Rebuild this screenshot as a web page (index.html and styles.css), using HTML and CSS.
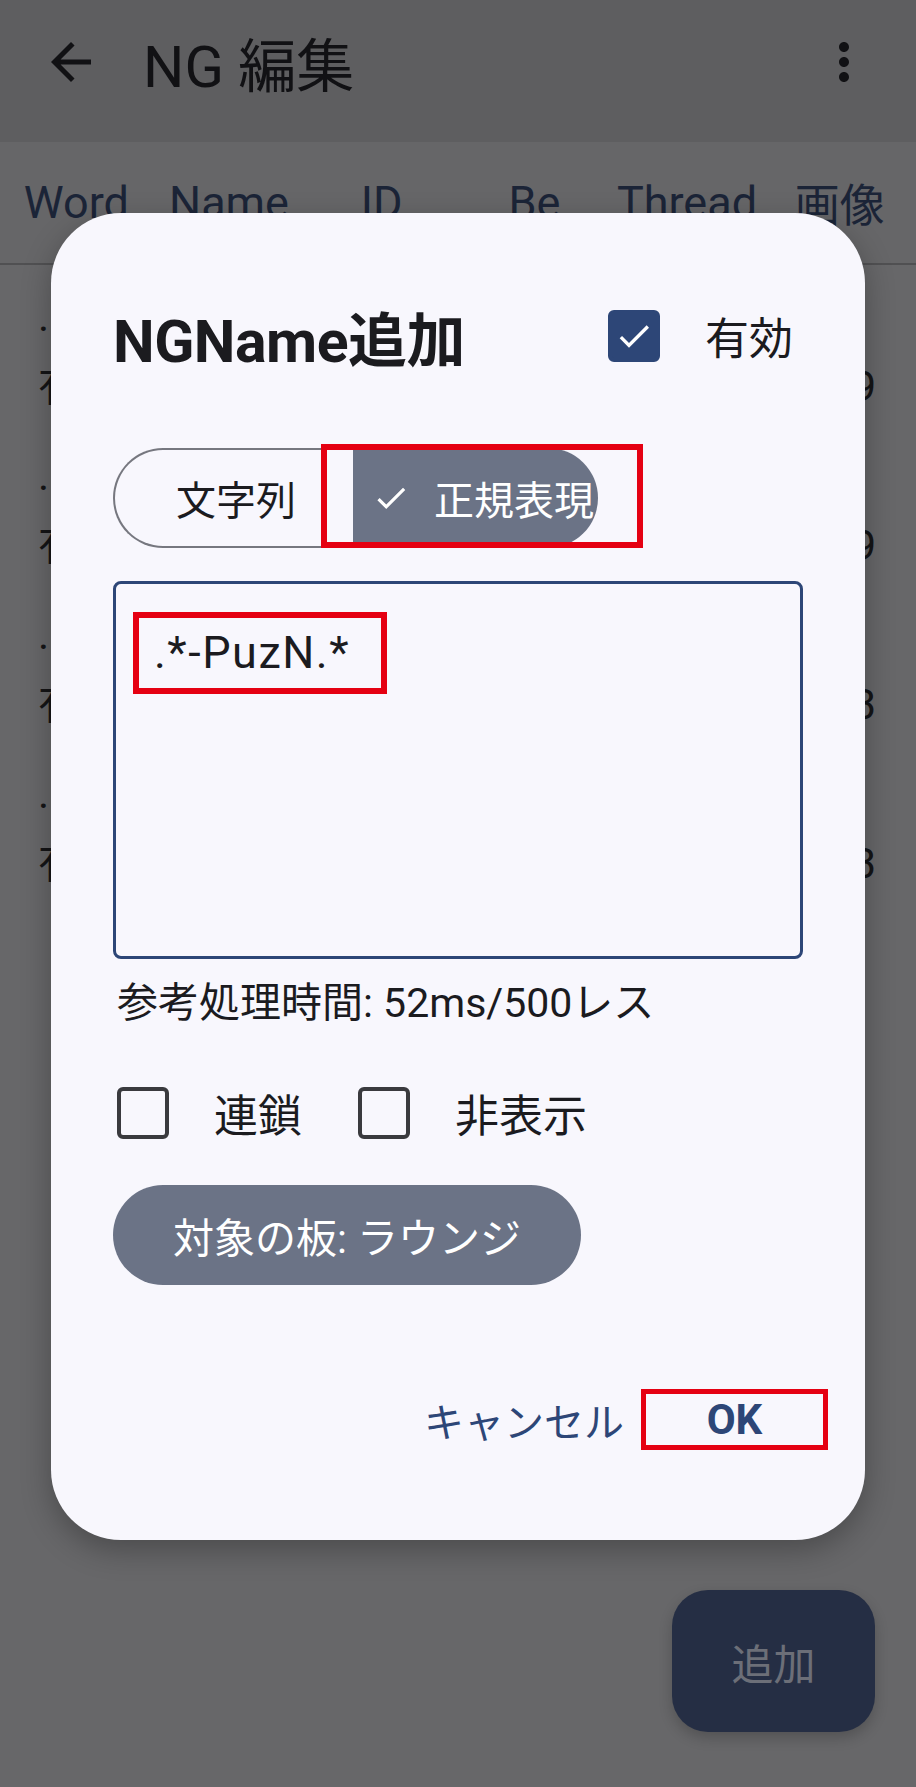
FILE: index.html
```html
<!DOCTYPE html>
<html lang="ja">
<head>
  <meta charset="UTF-8" />
  <meta name="viewport" content="width=device-width, initial-scale=1.0" />
  <title>NG 編集</title>
  <link rel="stylesheet" href="styles.css">
</head>
<body>

  <!-- Page behind the dialog (already dimmed by scrim) -->
  <div class="page">
    <header class="appbar">
      <svg class="icon back" viewBox="0 0 24 24"><path d="M20 11H7.83l5.59-5.59L12 4l-8 8 8 8 1.41-1.41L7.83 13H20v-2z"/></svg>
      <h1>NG 編集</h1>
      <svg class="icon more" viewBox="0 0 24 24"><path d="M12 8c1.1 0 2-.9 2-2s-.9-2-2-2-2 .9-2 2 .9 2 2 2zm0 2c-1.1 0-2 .9-2 2s.9 2 2 2 2-.9 2-2-.9-2-2-2zm0 6c-1.1 0-2 .9-2 2s.9 2 2 2 2-.9 2-2-.9-2-2-2z"/></svg>
    </header>

    <nav class="tabs">
      <span>Word</span>
      <span>Name</span>
      <span>ID</span>
      <span>Be</span>
      <span>Thread</span>
      <span>画像</span>
    </nav>

    <ul class="list">
      <li><div>· .*名無し.*</div><div class="meta"><span>有効 正規表現 全板</span><span>29</span></div></li>
      <li><div>· テスト</div><div class="meta"><span>有効 文字列 全板</span><span>19</span></div></li>
      <li><div>· .*-Abcd.*</div><div class="meta"><span>有効 正規表現 ラウンジ</span><span>3</span></div></li>
      <li><div>· .*-Efgh.*</div><div class="meta"><span>有効 正規表現 ラウンジ</span><span>3</span></div></li>
    </ul>

    <button class="fab">追加</button>
  </div>

  <!-- Dialog -->
  <div class="dialog">
    <div class="dialog-head">
      <h2>NGName追加</h2>
      <label class="check-group">
        <span class="box checked">
          <svg viewBox="0 0 24 24"><path d="M9 16.17L4.83 12l-1.42 1.41L9 19 21 7l-1.41-1.41z"/></svg>
        </span>
        <span>有効</span>
      </label>
    </div>

    <div class="segments">
      <div class="seg">文字列</div>
      <div class="seg active">
        <svg viewBox="0 0 24 24"><path d="M9 16.17L4.83 12l-1.42 1.41L9 19 21 7l-1.41-1.41z"/></svg>
        <span>正規表現</span>
      </div>
      <div class="mark seg-mark"></div>
    </div>

    <div class="textarea">
      <span class="mark-text">.*-PuzN.*</span>
    </div>

    <p class="hint">参考処理時間: 52ms/500レス</p>

    <div class="options">
      <label class="check-group"><span class="box"></span><span>連鎖</span></label>
      <label class="check-group"><span class="box"></span><span>非表示</span></label>
    </div>

    <button class="chip">対象の板: ラウンジ</button>

    <div class="actions">
      <button class="text-btn">キャンセル</button>
      <button class="text-btn ok">OK</button>
    </div>
  </div>

</body>
</html>
```

FILE: styles.css
```css
body {
  margin: 0;
  width: 916px;
  height: 1787px;
  overflow: hidden;
  background: #676769;
  font-family: Roboto, "Noto Sans CJK JP", sans-serif;
  color: #1b1b1f;
  position: relative;
}

button {
  font-family: inherit;
  border: none;
  background: none;
  padding: 0;
}

/* Background page */
.page {
  height: 100%;
}

.appbar {
  height: 142px;
  box-sizing: border-box;
  padding: 0 42px 18px 41px;
  background: #5e5e60;
  display: flex;
  align-items: center;
}

.appbar h1 {
  margin: 0 0 0 42px;
  font-size: 58px;
  font-weight: 400;
  color: #111114;
  flex: 1;
}

.icon {
  width: 60px;
  height: 60px;
  fill: #111114;
}

.tabs {
  height: 121px;
  display: grid;
  grid-template-columns: repeat(6, 1fr);
  align-items: center;
  border-bottom: 2px solid #505052;
  background: #666668;
}

.tabs span {
  text-align: center;
  font-size: 45px;
  color: #1b2437;
  white-space: nowrap;
}

.list {
  list-style: none;
  margin: 0;
  padding: 0;
}

.list li {
  height: 159px;
  box-sizing: border-box;
  padding: 36px 40px 0 38px;
  font-size: 42px;
  line-height: 57px;
  color: #141416;
}

.meta {
  display: flex;
  justify-content: space-between;
}

.fab {
  position: absolute;
  right: 41px;
  bottom: 55px;
  width: 203px;
  height: 142px;
  border-radius: 36px;
  background: #252e44;
  color: #6c6f78;
  font-size: 42px;
  box-shadow: 0 6px 14px rgba(0,0,0,0.2);
}

/* Dialog */
.dialog {
  position: absolute;
  left: 51px;
  top: 213px;
  width: 814px;
  box-sizing: border-box;
  padding: 90px 62px 90px 62px;
  background: #f8f7fd;
  border-radius: 70px;
  box-shadow: 0 10px 30px rgba(0,0,0,0.28);
}

.dialog-head {
  height: 66px;
  display: flex;
  align-items: center;
}

.dialog-head h2 {
  margin: 0;
  font-size: 59px;
  font-weight: 700;
  flex: 1;
  letter-spacing: -0.5px;
}

.dialog-head .check-group {
  margin-right: 10px;
  gap: 45px;
}

.check-group {
  display: flex;
  align-items: center;
  gap: 45px;
  font-size: 44px;
}

.box {
  width: 44px;
  height: 44px;
  border: 4px solid #3a3a3e;
  border-radius: 6px;
  display: flex;
  align-items: center;
  justify-content: center;
}

.box.checked {
  background: #2d4677;
  border-color: #2d4677;
}

.box svg {
  width: 40px;
  height: 40px;
  fill: #ffffff;
}

/* Segmented button */
.segments {
  position: relative;
  margin-top: 79px;
  width: 485px;
  height: 100px;
  display: flex;
}

.seg {
  display: flex;
  align-items: center;
  box-sizing: border-box;
  font-size: 40px;
}

.seg:first-child {
  width: 240px;
  justify-content: center;
  padding-left: 4px;
  border: 2px solid #76777f;
  border-right: none;
  border-radius: 50px 0 0 50px;
}

.seg.active {
  width: 245px;
  padding-left: 19px;
  gap: 24px;
  background: #6b7386;
  color: #ffffff;
  border-radius: 0 50px 50px 0;
  white-space: nowrap;
  overflow: hidden;
}

.seg.active svg {
  width: 38px;
  height: 38px;
  fill: #ffffff;
}

.mark {
  border: 6px solid #e50012;
  box-sizing: border-box;
}

.seg-mark {
  position: absolute;
  left: 208px;
  top: -4px;
  width: 322px;
  height: 104px;
}

.textarea {
  margin-top: 33px;
  height: 378px;
  box-sizing: border-box;
  border: 3px solid #2d4677;
  border-radius: 8px;
  padding: 28px 0 0 17px;
}

.mark-text {
  display: inline-block;
  height: 82px;
  box-sizing: border-box;
  padding: 0 31px 0 15px;
  border: 6px solid #e50012;
  font-size: 45px;
  letter-spacing: 1.5px;
  line-height: 70px;
}

.hint {
  margin: 19px 0 0 4px;
  font-size: 41px;
  line-height: 50px;
}

.options {
  margin-top: 55px;
  height: 60px;
  display: flex;
  align-items: center;
  gap: 56px;
  padding-left: 4px;
}

.chip {
  margin-top: 42px;
  height: 100px;
  padding: 0 60px;
  border-radius: 50px;
  background: #6b7386;
  color: #ffffff;
  font-size: 41px;
}

.actions {
  margin-top: 104px;
  height: 61px;
  display: flex;
  justify-content: flex-end;
  align-items: center;
  gap: 17px;
  margin-right: -25px;
}

.text-btn {
  font-size: 40px;
  color: #2d4677;
}

.ok {
  width: 187px;
  height: 61px;
  border: 5px solid #e50012;
  font-weight: 700;
  font-size: 42px;
}
```
